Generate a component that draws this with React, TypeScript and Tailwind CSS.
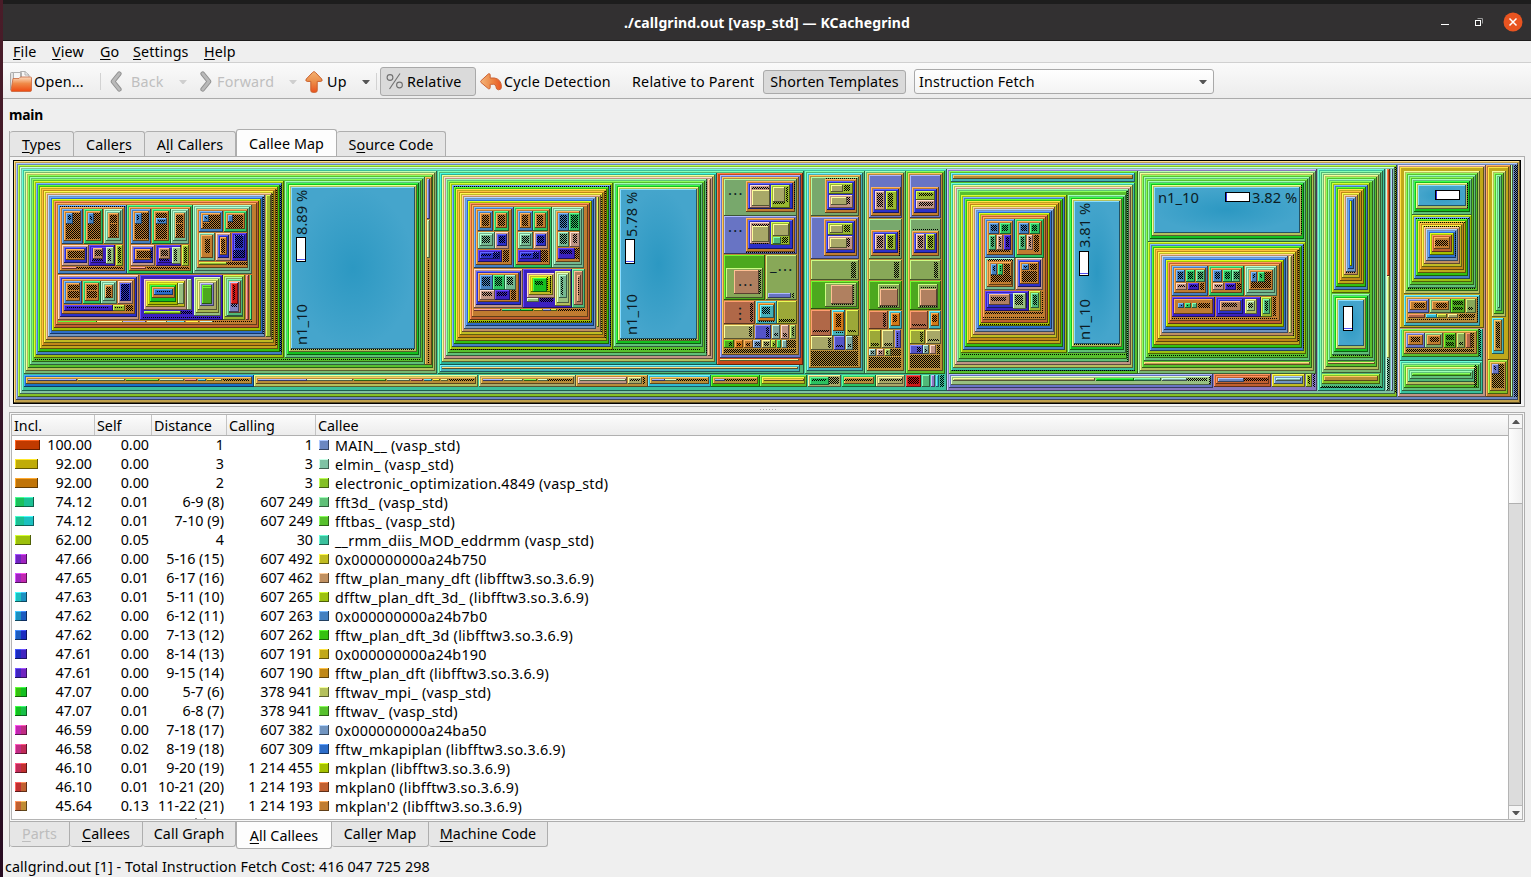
import React from "react";

/* ---------- treemap palette ---------- */
const PALETTE: Record<string, string> = {
  a: "#c0a04c", b: "#6b87c0", c: "#84c026", d: "#7fc2a4", e: "#3ac09c", f: "#78b870",
  g: "#b4c05c", h: "#57c02d", i: "#60c078", j: "#9cc010", k: "#4480c0", l: "#34c010",
  m: "#c0a81a", n: "#c08818", o: "#c0bb22", p: "#c09060", q: "#7094c0", r: "#2c6cc8",
  s: "#a4c000", t: "#c06030", u: "#c07c30", v: "#2cc060", w: "#74b890", z: "#3c20c0",
  A: "#2c30c8", B: "#c09484", C: "#98b830", D: "#c86060", E: "#98c080", F: "#45a5cc",
  G: "#14c020", H: "#a8b850", I: "#8080c0", J: "#d01818", K: "#c84818", L: "#6874c4",
  M: "#78a86c", N: "#4ca81e", O: "#88a858", P: "#b06848", Q: "#44b0b8", R: "#9ca838",
  S: "#a8a868", T: "#5454c8", U: "#80a8a0", V: "#b08060", W: "#1870c8", X: "#d07818",
  Y: "#30b8d0", Z: "#8878c0", "0": "#b88c38", "1": "#2ab098", "2": "#50b878",
};

function shade(hex: string) {
  const n = parseInt(hex.slice(1), 16);
  const rgb = [n >> 16, (n >> 8) & 255, n & 255];
  const v = Math.max(...rgb);
  const v2 = v * 1.5;
  let light: number[];
  if (v2 > 255) {
    const mn = Math.min(...rgb);
    const s = v ? (v - mn) / v : 0;
    const s2 = Math.max(0, s - (v2 - 255) / 255);
    light = rgb.map((c) => {
      const k = v === mn ? 0 : (v - c) / (v - mn);
      return Math.round(255 * (1 - s2 * k));
    });
  } else light = rgb.map((c) => Math.round(c * 1.5));
  const dark = rgb.map((c) => Math.round(c / 2));
  return { light: `rgb(${light.join(",")})`, dark: `rgb(${dark.join(",")})` };
}

/* Each entry: "x1 y1 x2 y2 frames" in thirds of a pixel from the group origin.
   Every letter is one nesting level, "#" is an area too small to subdivide. */
const GROUPS: { ox: number; items: string }[] = [
  { ox: 0, items: `
42 18 4560 744 ab|54 30 4192 726 cd|66 42 2840 708 e|72 48 1312 657 fgh|1274 66 1296 630 0
90 66 1274 630 ih|102 78 853 609 jklmno|138 114 817 555 p|797 120 812 546 C|144 120 796 546 qrstu
102 611 1262 615 #|841 90 845 590 #|829 102 832 572 #|817 114 820 555 #|789 126 792 537 #
174 150 380 357 ku|186 162 250 268 ku|198 174 240 252 #|198 174 218 206 k|204 180 212 196 #
252 162 310 268 vu|264 174 300 252 #|264 174 282 206 k|270 184 276 194 #|312 162 368 268 wwu|330 180 350 204 #|330 207 350 245 #
186 270 266 333 BAu|204 288 252 308 #|268 270 346 333 zz|278 280 310 312 V|284 286 306 302 #|276 312 308 318 #|318 276 342 328 E|325 282 334 318 #
348 270 368 333 C|354 276 362 325 #|186 336 230 342 D|232 336 368 341 #|180 153 374 157 #
382 150 578 357 vu|394 162 454 268 ku|404 174 446 252 #|404 174 426 206 k|411 180 418 196 #
456 162 512 268 vu|468 174 500 252 #|468 188 502 206 k|474 194 494 200 #|514 162 566 268 wwu|529 180 550 204 #|529 207 550 245 #
394 270 466 333 BAu|410 288 456 308 #|468 270 544 333 zz|478 280 510 312 V|484 286 504 302 #|476 312 508 318 #|516 276 542 328 E|523 282 532 318 #
546 270 566 333 C|551 276 560 325 #|394 336 438 342 D|440 336 566 341 #
580 150 757 357 wwu|598 168 670 230 ku|626 180 660 218 #|608 180 626 200 k|614 186 620 192 #|610 204 660 218 #
672 168 740 230 vu|700 180 730 200 #|684 180 700 200 k|684 202 730 218 #|598 234 646 318 wu|614 252 630 295 #
648 234 694 318 BAu|664 252 676 294 #|696 234 740 318 zA|706 240 730 278 #|700 286 736 308 #|598 321 680 330 C|682 321 740 330 #
174 360 418 496 BAu|192 378 246 448 ku|204 390 236 406 #|204 409 236 430 #|248 378 302 448 vu|260 390 290 406 #|260 409 290 430 #
304 378 352 448 wwu|318 396 334 430 #|354 378 398 448 BA|364 388 388 434 #|192 450 338 468 z|200 456 328 460 #|340 450 376 468 C|345 456 370 460 #|378 450 398 468 #
420 360 668 496 z|432 372 560 464 Bo|444 384 534 450 sG|456 396 524 430 ur|470 407 510 412 #|534 384 552 448 E|562 372 576 464 E|432 468 542 476 c|544 468 576 476 #|428 485 660 490 #
582 366 664 484 EHS|600 384 642 454 IN|606 396 636 448 N
670 360 736 496 CM|680 372 730 484 2V|688 380 718 470 I|694 384 714 446 J|699 390 706 436 #|694 447 712 456 #|738 360 748 496 D|750 360 757 496 v
174 498 290 502 l|292 498 368 502 g|370 498 438 502 L|440 498 500 502 E|502 498 556 502 Y|558 498 598 502 o|600 498 638 502 U|640 498 757 502 #
72 659 761 697 W0|84 671 232 679 L|234 671 376 679 E|378 671 478 679 h|480 671 553 679 E|555 671 592 679 D|594 671 618 679 Y|620 671 642 679 o|644 671 666 679 g|668 671 748 679 #
763 659 1435 697 g0|775 671 920 679 L` },
  { ox: 280, items: `
16 78 422 609 iGg|34 96 404 582 F|34 581 404 585 #|441 72 450 193 L|441 195 450 310 E|444 312 448 624 #
82 671 219 679 E|221 671 319 679 h|321 671 391 679 E|393 671 430 679 D|432 671 457 679 Y|459 671 481 679 o|483 671 505 679 g|506 671 583 679 #
597 659 887 697 S0|609 671 670 679 L|672 671 729 679 E|731 671 772 679 h|774 671 803 679 E|804 671 875 679 #
474 48 1573 657 2|480 630 1561 651 Q|486 636 1555 642 a|480 54 1311 630 1gB|1284 72 1293 603 p|498 72 1281 603 ih
510 84 998 585 jklmnop|552 126 948 522 qrstu|510 581 1264 585 #|522 92 992 96 #|1279 78 1282 594 #|991 90 994 572 #|975 106 978 550 #|963 126 966 530 #|950 126 958 516 C|564 498 940 501 #
582 156 701 340 ku|594 168 640 229 ku|606 180 626 214 #|642 168 688 229 vu|654 180 674 214 #|594 231 644 283 ww|606 243 630 264 #|646 231 688 283 BA|656 243 676 264 #|594 285 666 320 zA|604 296 634 302 #|640 291 658 308 #|668 285 688 320 #
702 156 815 340 vu|714 168 758 229 ku|726 180 744 214 #|760 168 804 229 vu|772 180 790 214 #|714 231 760 283 ww|726 243 748 264 #|762 231 804 283 BA|772 243 792 264 #|714 285 782 320 zA|724 296 752 302 #|758 291 774 308 #|784 285 804 320 #
816 156 912 340 wwu|834 174 866 229 k|840 180 860 220 #|868 174 900 229 v|874 180 894 220 #|834 231 868 276 w|840 238 860 266 #|870 231 900 276 B|878 238 892 264 #|834 279 884 311 z|840 286 876 298 #|886 279 898 311 #
582 342 728 459 BAu|600 360 638 404 k|606 366 630 394 #|640 360 674 404 v|646 366 666 394 #|676 360 708 404 w|680 366 700 390 #|600 406 644 434 B|606 412 636 424 #|646 406 690 434 z|650 412 682 424 #|692 406 708 434 #
730 342 875 459 z|742 354 824 428 Bos|758 370 800 410 G|764 378 788 390 #|800 362 803 404 #|811 362 814 416 #|742 430 778 442 E|780 430 818 442 #|826 348 872 452 gE|838 360 860 430 w|844 366 850 420 #
876 342 916 459 2V|890 360 902 440 V|894 366 898 420 #
582 462 664 469 D|666 462 722 469 v|724 462 760 469 G|762 462 788 469 o|790 462 812 469 L|814 462 832 469 C|834 462 915 468 #` },
  { ox: 560, items: `
162 84 428 577 iGg|180 102 410 552 F|180 551 410 555 #
472 54 728 630 K|480 612 716 618 g|480 60 722 609 L0
492 72 710 182 M|558 78 704 172 uA|570 90 631 158 B|576 104 630 152 S|576 96 626 102 #|634 90 690 158 C|640 96 676 140 S|677 96 684 140 #|640 140 676 146 #|702 80 705 166 #
492 184 710 298 L|558 190 704 292 uA|570 202 631 268 B|576 214 628 262 S|576 206 626 212 #|576 263 628 267 #|634 202 690 270 C|638 206 686 244 S|640 246 664 266 2|666 246 684 264 #|558 291 704 294 #
492 300 616 435 N|498 340 608 430 O|522 346 596 418 V|597 346 603 418 #|618 300 710 435 O|624 414 694 430 L|696 414 702 430 #
492 438 586 508 P|570 444 580 502 #|588 438 650 508 QX|600 450 642 488 Q|606 456 630 478 #|596 497 644 502 #|652 438 710 508 R|656 492 704 502 #
492 510 583 552 S|567 516 577 546 #|585 510 634 552 T|618 516 628 546 #|636 510 660 552 U|642 534 654 544 #|662 510 688 552 B|668 534 682 546 #|690 510 708 552 O|696 516 702 544 #
492 555 523 580 N|506 562 516 572 #|525 555 550 580 X|531 564 544 574 #|552 555 578 580 u|558 564 570 574 #|580 555 604 580 q|586 562 600 574 #|606 555 632 580 S|612 562 626 574 #|634 555 648 580 C|638 564 644 572 #|650 555 664 580 v|666 555 680 580 U|682 555 708 580 #|492 582 708 594 #
48 659 263 697 0|54 665 201 687 B|60 671 198 679 E|204 665 246 687 S|209 671 240 679 #|250 665 254 687 #
265 659 452 697 Y0|277 671 314 679 L|316 671 350 679 E|352 671 442 679 #|454 659 599 697 l0|466 671 494 679 L|496 671 588 679 #|601 659 741 697 ho|613 671 733 679 0` },
  { ox: 800, items: `
16 48 194 657 2Q0|34 66 176 184 M|76 72 170 174 uA|78 69 170 73 #|88 84 158 118 C|94 90 130 110 S|132 90 150 108 #|88 121 158 158 B|92 126 140 150 S|140 126 150 148 #
34 187 176 313 L|72 192 170 304 uA|84 204 158 240 C|90 210 130 234 S|132 210 150 232 #|84 243 158 286 B|90 248 140 278 S|141 248 150 276 #
34 316 176 376 O|152 321 168 370 #|34 378 176 463 N|76 384 170 456 O|94 390 158 448 V|159 390 162 448 #|94 448 158 451 #
34 466 94 542 P|40 525 88 531 #|96 466 136 542 Q|100 472 132 528 X|108 477 124 516 #|104 530 130 535 #|138 466 176 542 R|144 525 168 531 #
34 544 100 586 S|84 549 94 580 #|102 544 136 586 T|108 570 130 576 #|138 544 158 586 U|144 567 152 576 #|160 544 174 584 #|34 588 174 634 #
196 48 317 657 i0|208 60 306 190 L|214 96 304 184 uA|226 108 256 164 B|231 114 250 156 #|258 108 290 164 C|264 114 280 156 #
208 192 306 312 M|214 226 300 304 uA|226 238 256 284 B|231 243 250 278 #|258 238 288 284 C|264 243 280 278 #|297 226 300 304 #
208 316 306 376 O|282 321 298 370 #|208 378 306 464 N|234 386 300 458 O|240 402 294 452 V|240 396 292 400 #|240 452 292 455 #
208 468 264 522 P|249 474 258 516 #|266 468 306 522 Q|274 474 300 514 X|279 480 292 500 #|208 526 244 579 R|212 564 238 574 #|246 526 282 579 S|252 564 276 574 #|284 526 304 579 T|290 532 294 574 #
208 582 228 604 U|212 588 222 598 #|230 582 252 604 B|236 588 246 598 #|254 582 272 604 O|258 588 264 598 #|274 582 304 604 #|208 606 304 640 #
318 48 434 657 h0|330 60 422 190 L|336 96 418 182 uA|348 108 404 134 C|356 114 398 124 #|348 136 404 162 B|356 141 398 152 #
330 192 422 312 M|336 228 418 304 uA|338 222 416 226 #|348 238 376 284 B|354 243 370 278 #|378 238 404 284 C|384 243 398 278 #
330 316 422 376 O|402 321 414 370 #|330 378 422 466 N|354 386 414 458 O|360 402 410 452 V|360 396 410 400 #|360 452 410 455 #
330 468 384 522 P|336 507 378 513 #|386 468 422 522 Q|392 474 416 514 X|397 480 410 500 #|330 526 376 568 R|360 532 368 562 #|378 526 422 568 S|384 552 416 558 #
330 570 368 598 T|352 576 362 592 #|370 570 388 598 U|375 582 382 590 #|390 570 408 598 B|410 570 420 598 #|330 600 420 640 #
24 659 124 697 S|30 665 86 690 v|36 671 78 678 #|86 665 116 686 #|126 659 227 697 v0|132 671 216 678 #|229 659 316 697 SS|240 671 306 678 #|318 659 364 697 J|324 665 358 688 #|366 659 390 697 2|393 659 405 697 Z|407 659 417 697 Y|420 659 432 697 #
442 42 1552 708 Z|448 48 1013 657 h|454 54 1005 80 Q|460 60 1000 72 0|454 84 1005 648 egBih|483 120 802 594 jklmnop|525 162 762 531 qrstu|454 644 1005 648 #|483 596 985 600 #|982 108 985 620 #
555 192 644 308 ku|567 204 598 238 k|573 209 592 228 #|600 204 632 238 v|606 209 624 228 #|567 240 589 284 2|573 246 583 276 #|591 240 609 284 B|597 246 603 276 #|611 240 632 284 z|617 246 626 276 #|567 285 630 290 #
645 192 732 308 vu|657 204 688 238 k|663 209 682 228 #|690 204 720 238 v|696 209 712 228 #|657 240 679 284 2|663 246 672 276 #|681 240 699 284 B|687 246 693 276 #|702 240 718 290 #
555 310 645 406 wu|567 321 636 390 u|572 326 592 360 k|578 332 585 348 #|594 326 610 360 v|600 332 604 350 #|612 326 630 360 #|572 361 632 382 #|563 312 640 318 #
648 310 730 406 BAu|666 326 688 346 k|672 333 682 338 #|690 326 712 346 #|666 348 712 382 #
555 408 686 468 zA|567 418 630 450 V|573 426 618 438 #|638 414 678 462 E|645 420 668 450 #|688 408 724 468 C2|699 420 711 450 #|726 408 730 470 #|555 472 730 476 #|548 486 736 490 #|540 507 746 510 #
448 657 1240 700 LE|460 668 885 679 S` },
  { ox: 1040, items: `
84 120 258 594 iGg|102 138 240 567 F|102 567 240 571 #
295 48 827 657 fgh|312 620 810 629 a|313 66 809 618 ih|324 78 797 260 iGg|342 96 779 233 F|783 90 787 240 #
325 262 797 598 jklmnop|747 304 755 535 g|367 304 745 535 qrstu|325 599 794 603 #|788 270 791 580 #|773 286 776 562 #|759 300 762 544 #
397 334 505 423 ku|408 346 436 381 k|414 351 430 372 #|438 346 466 381 v|444 351 460 372 #|468 346 496 381 2|474 351 489 372 #|408 384 441 406 B|414 390 436 396 #|443 384 478 406 z|449 390 472 396 #|480 384 492 406 #
508 334 613 423 vu|518 346 546 381 k|524 351 540 372 #|548 346 575 381 v|554 351 569 372 #|577 346 601 381 2|582 351 596 372 #|518 384 552 406 B|524 390 545 396 #|554 384 588 406 z|560 390 583 396 #|590 384 602 406 #
615 334 710 423 wwu|633 352 652 380 k|639 357 645 370 #|654 352 674 380 v|660 357 667 370 #|676 352 692 380 #|633 382 692 400 #
397 426 525 486 zu|414 444 432 460 k|421 449 426 454 #|434 444 454 460 v|440 449 447 454 #|456 444 472 460 2|474 444 510 460 #
527 426 662 486 z|534 432 610 478 AV|546 444 592 456 #|614 432 652 476 gE|624 444 640 458 #|664 426 696 486 C2|675 438 685 468 #|698 426 708 484 #|397 488 710 492 #
167 668 281 679 G|283 668 364 679 2|366 668 441 679 U|442 668 500 679 #|508 662 514 688 #
523 657 694 697 tt|535 668 613 680 b|613 668 684 678 #|697 657 795 697 oqU` },
  { ox: 1290, items: `
47 657 67 697 C|53 662 60 686 #|68 657 76 697 #|315 36 320 714 #
83 42 285 708 e2|97 657 270 687 c|103 663 264 678 0|97 54 273 655 fgh|114 620 255 628 a|115 72 255 618 ih|127 84 241 415 jklmnopqrs|127 418 241 600 iGg|145 436 223 573 F|127 600 241 603 #|92 694 276 698 #|168 350 196 354 #
287 42 301 708 d|290 42 299 362 K|290 364 299 608 g|291 612 298 705 #|302 42 310 708 q
325 30 587 726 B|331 36 581 520 m|342 48 569 417 ghih|366 72 545 180 iGg|384 90 528 153 F|531 84 534 160 #|366 180 545 381 jklmnopqrstu|436 254 474 272 #|354 398 556 402 #|376 188 540 191 #|388 202 524 205 #|402 212 508 215 #|496 230 499 306 #
342 421 570 514 Q0|562 426 565 504 #|354 433 418 474 Lu|372 444 406 458 #|420 433 482 474 Mu|438 444 470 458 #|484 433 526 474 N|489 438 520 450 #|489 455 520 466 #|528 433 558 474 O|534 456 550 464 #|354 476 406 490 P|408 476 440 490 Y|442 476 472 490 R|474 476 504 490 S|506 476 556 490 #|358 491 556 495 #
330 522 580 617 e|336 522 566 606 h0|348 534 404 580 Lu|362 546 390 560 #|406 534 460 580 Mu|420 546 448 560 #|462 534 498 580 N|467 540 492 554 #|467 560 492 572 #|500 534 526 580 O|507 562 520 570 #|528 534 542 580 P|543 534 552 580 #|348 582 552 592 #|566 522 574 606 #
330 618 580 717 eihg2ih|552 630 562 696 #
588 30 663 726 u|594 36 657 614 m|606 48 649 487 ghi2|606 489 643 596 Q0|618 501 630 580 #|594 616 655 717 c0|606 628 642 700 #|606 628 626 656 L|612 634 618 646 #|664 30 670 726 f|672 30 683 726 #` },
];

const P = (v: number) => Math.round(v / 3);

function Treemap() {
  const out: React.ReactNode[] = [];
  let id = 0;
  for (const grp of GROUPS) {
    for (const raw of grp.items.split(/[|\n]/)) {
      const line = raw.trim();
      if (!line) continue;
      const [a, b, c, d, keys] = line.split(" ");
      let x1 = P(+a) + grp.ox, y1 = P(+b) + 155, x2 = P(+c) + grp.ox, y2 = P(+d) + 155;
      for (const k of keys) {
        const w = x2 - x1, h = y2 - y1;
        if (w <= 0 || h <= 0) break;
        if (k === "#") {
          out.push(<rect key={id++} x={x1} y={y1} width={w} height={h} fill="url(#hatch)" />);
          break;
        }
        const s = shade(PALETTE[k]);
        out.push(
          <g key={id++}>
            <rect x={x1} y={y1} width={w} height={h} fill={s.dark} />
            <rect x={x1} y={y1} width={Math.max(1, w - 1)} height={Math.max(1, h - 1)} fill={s.light} />
            {w > 2 && h > 2 && (
              <rect x={x1 + 1} y={y1 + 1} width={w - 2} height={h - 2} fill={k === "F" ? "url(#leaf)" : PALETTE[k]} />
            )}
          </g>,
        );
        x1 += 2; y1 += 2; x2 -= 2; y2 -= 3;
      }
    }
  }
  const bars: [number, number, number, number, string][] = [
    [296, 237, 10, 25, "b"], [625, 239, 10, 25, "b"], [1079, 251, 10, 25, "b"],
    [1225, 192, 25, 10, "l"], [1435, 190, 25, 10, "l"], [1343, 306, 10, 25, "b"],
  ];
  const labels: [number, number, string, boolean][] = [
    [307, 345, "n1_10", true], [307, 235, "8.89 %", true],
    [637, 335, "n1_10", true], [637, 237, "5.78 %", true],
    [1090, 340, "n1_10", true], [1090, 248, "3.81 %", true],
    [1158, 203, "n1_10", false], [1252, 203, "3.82 %", false],
    [728, 195, "...", false], [728, 232, "...", false], [738, 286, "...", false], [770, 271, "_...", false],
    [741, 321, "...", true],
  ];
  return (
    <svg width="1508" height="244" viewBox="13 160 1508 244" shapeRendering="crispEdges" className="block">
      <defs>
        <pattern id="hatch" width="2" height="2" patternUnits="userSpaceOnUse">
          <rect width="1" height="1" fill="#000" />
          <rect x="1" y="1" width="1" height="1" fill="#000" />
        </pattern>
        <radialGradient id="leaf">
          <stop offset="0" stopColor="#2c98c2" />
          <stop offset="1" stopColor="#45a5cc" />
        </radialGradient>
      </defs>
      <rect x="13" y="160" width="1508" height="244" fill="#000" />
      {out}
      {bars.map(([x, y, w, h, side], n) => (
        <g key={n}>
          <rect x={x} y={y} width={w} height={h} fill="#000" />
          <rect x={x + 1} y={y + 1} width={w - 2} height={h - 2} fill="#fff" />
          {side === "b" ? (
            <rect x={x + 1} y={y + h - 3} width={w - 2} height={1} fill="#5050f0" />
          ) : (
            <rect x={x + 1} y={y + 1} width={1} height={h - 2} fill="#3030e0" />
          )}
        </g>
      ))}
      {labels.map(([x, y, t, rot], n) => (
        <text key={n} x={x} y={y} transform={rot ? `rotate(-90 ${x} ${y})` : undefined} fill="#0c1c24"
          className={t.includes("...") ? "text-[15px] tracking-[1.2px] [font-family:'Noto_Sans',sans-serif]" : "text-[14.7px] [font-family:'Noto_Sans',sans-serif]"}>{t}</text>
      ))}
    </svg>
  );
}

/* ---------- list ---------- */
type Row = [string, string, string, string, string, string, string, string, number];
const ROWS: Row[] = [
  ["100.00", "0.00", "1", "1", "MAIN__ (vasp_std)", "#6b87c0", "#c03a00", "#c03a00", 25],
  ["92.00", "0.00", "3", "3", "elmin_ (vasp_std)", "#7fc2a4", "#c0ac08", "#c0ac08", 23],
  ["92.00", "0.00", "2", "3", "electronic_optimization.4849 (vasp_std)", "#84c026", "#c07408", "#c07408", 23],
  ["74.12", "0.01", "6-9 (8)", "607 249", "fft3d_ (vasp_std)", "#60c078", "#1cc05c", "#1cc094", 19],
  ["74.12", "0.01", "7-10 (9)", "607 249", "fftbas_ (vasp_std)", "#57c02d", "#1cc094", "#1cc0c0", 19],
  ["62.00", "0.05", "4", "30", "__rmm_diis_MOD_eddrmm (vasp_std)", "#3ac09c", "#9cc00c", "#9cc00c", 16],
  ["47.66", "0.00", "5-16 (15)", "607 492", "0x000000000a24b750", "#c0bb22", "#7024c0", "#a024c0", 12],
  ["47.65", "0.01", "6-17 (16)", "607 462", "fftw_plan_many_dft (libfftw3.so.3.6.9)", "#c09060", "#a024c0", "#c028b0", 12],
  ["47.63", "0.01", "5-11 (10)", "607 265", "dfftw_plan_dft_3d_ (libfftw3.so.3.6.9)", "#9cc010", "#1cc0c0", "#1c90c0", 12],
  ["47.62", "0.00", "6-12 (11)", "607 263", "0x000000000a24b7b0", "#4480c0", "#1c90c0", "#1c5cc0", 12],
  ["47.62", "0.00", "7-13 (12)", "607 262", "fftw_plan_dft_3d (libfftw3.so.3.6.9)", "#34c010", "#1c5cc0", "#1c2cc0", 12],
  ["47.61", "0.00", "8-14 (13)", "607 191", "0x000000000a24b190", "#c0a81a", "#1c2cc0", "#4024c0", 12],
  ["47.61", "0.00", "9-15 (14)", "607 190", "fftw_plan_dft (libfftw3.so.3.6.9)", "#c08818", "#4024c0", "#7024c0", 12],
  ["47.07", "0.00", "5-7 (6)", "378 941", "fftwav_mpi_ (vasp_std)", "#b4c05c", "#34c010", "#14c020", 12],
  ["47.07", "0.01", "6-8 (7)", "378 941", "fftwav_ (vasp_std)", "#57c02d", "#14c020", "#18c048", 12],
  ["46.59", "0.00", "7-18 (17)", "607 382", "0x000000000a24ba50", "#7094c0", "#c028b0", "#c02c84", 12],
  ["46.58", "0.02", "8-19 (18)", "607 309", "fftw_mkapiplan (libfftw3.so.3.6.9)", "#2c6cc8", "#c02c84", "#c02c58", 12],
  ["46.10", "0.01", "9-20 (19)", "1 214 455", "mkplan (libfftw3.so.3.6.9)", "#a4c000", "#c02c58", "#c03030", 12],
  ["46.10", "0.01", "10-21 (20)", "1 214 193", "mkplan0 (libfftw3.so.3.6.9)", "#c06030", "#c03030", "#c06030", 12],
  ["45.64", "0.13", "11-22 (21)", "1 214 193", "mkplan'2 (libfftw3.so.3.6.9)", "#c07c30", "#c06030", "#c08c34", 12],
];

function Swatch({ from, to, width, height }: { from: string; to: string; width: number; height: number }) {
  const a = shade(from), b = shade(to);
  const half = Math.floor(width / 2);
  return (
    <svg width={width} height={height} shapeRendering="crispEdges" className="block shrink-0">
      <rect width={half} height={height} fill={from} />
      <rect x={half} width={width - half} height={height} fill={to} />
      <rect width={half} height="1" fill={a.light} />
      <rect x={half} width={width - half} height="1" fill={b.light} />
      <rect width="1" height={height} fill={a.light} />
      <rect y={height - 1} width={half} height="1" fill={a.dark} />
      <rect x={half} y={height - 1} width={width - half} height="1" fill={b.dark} />
      <rect x={width - 1} width="1" height={height} fill={b.dark} />
    </svg>
  );
}

const U = ({ children }: { children: React.ReactNode }) => (
  <span className="underline decoration-[1px] underline-offset-[2px]">{children}</span>
);

const Caret = ({ className }: { className: string }) => (
  <svg width="8" height="4" viewBox="0 0 8 4" className={className}><path d="M0 0h8L4.6 4H3.4z" fill="currentColor" /></svg>
);

const Chevron = ({ flip }: { flip?: boolean }) => (
  <svg width="13" height="21" viewBox="0 0 13 21" className={flip ? "-scale-x-100" : ""}>
    <path d="M9.3 2.7L3 10.5l6.3 7.8" fill="none" stroke="#909090" strokeWidth="4.6" strokeLinecap="round" strokeLinejoin="round" />
    <path d="M9.3 2.7L3 10.5l6.3 7.8" fill="none" stroke="#b9b9b9" strokeWidth="2.8" strokeLinecap="round" strokeLinejoin="round" />
  </svg>
);

function Tab({ children, w, state, bottom }: { children: React.ReactNode; w: string; state?: "on" | "off"; bottom?: boolean }) {
  const edge = bottom ? "rounded-b-[3px] border-t-0" : "rounded-t-[3px] border-b-0";
  const look =
    state === "on"
      ? "h-[27px] bg-[#fdfdfd] border-x"
      : `h-[25px] bg-[#e6e6e6] border-r border-l-0 ${bottom ? "pb-[2px]" : "pt-px"}`;
  return (
    <div className={`flex shrink-0 items-center justify-center border border-[#aeaeae] tracking-[0.08px] ${edge} ${look} ${w} ${state === "off" ? "text-[#bdbdbd]" : ""}`}>
      <span>{children}</span>
    </div>
  );
}

export default function App() {
  return (
    <div className="flex h-[877px] w-[1531px] overflow-hidden whitespace-nowrap bg-[#efefef] text-[14.3px] leading-[19px] text-black [font-family:'Noto_Sans',sans-serif]">
      <div className="w-[3px] shrink-0 bg-gradient-to-b from-[#4a1c28] via-[#341428] to-[#280c22]" />
      <div className="flex min-w-0 flex-1 flex-col">
        {/* title bar */}
        <div className="flex h-[41px] shrink-0 items-center border-t-4 border-b border-t-[#1d1d1d] border-b-[#1c1b1b] bg-[#323031]">
          <div className="w-[1430px] pl-[98px] text-center text-[14px] font-bold tracking-[0.12px] text-white">./callgrind.out [vasp_std] — KCachegrind</div>
          <svg width="90" height="36" viewBox="1433 4 90 36" className="shrink-0">
            <path d="M1441 24.5h8" stroke="#fff" />
            <path d="M1477.5 18.5h5v5" fill="none" stroke="#999" />
            <rect x="1475.5" y="20.5" width="5" height="5" fill="none" stroke="#fff" />
            <circle cx="1513" cy="22" r="9.5" fill="#e95420" />
            <path d="M1509.5 18.5l7 7m0-7l-7 7" stroke="#fff" strokeWidth="1.5" />
          </svg>
        </div>
        {/* menu bar */}
        <div className="flex h-[22px] shrink-0 items-center border-b border-[#d0d0d0] pl-[10px] tracking-[0.15px]">
          <div className="w-[39px]"><U>F</U>ile</div>
          <div className="w-[48px]"><U>V</U>iew</div>
          <div className="w-[33px]"><U>G</U>o</div>
          <div className="w-[71px]"><U>S</U>ettings</div>
          <div><U>H</U>elp</div>
        </div>
        {/* tool bar */}
        <div className="flex h-[36px] shrink-0 items-center border-b border-[#ababab] bg-gradient-to-b from-[#fafafa] to-[#ececec] pt-[2px] pl-[7px] tracking-[0.22px]">
          <div className="flex w-[90px] items-center">
            <svg width="22" height="21" viewBox="0 0 22 21" className="mr-[2px]">
              <path d="M.5 19V2.5q0-1 1-1h4l1 1.5" fill="#e2e2e2" stroke="#aaa" />
              <path d="M3.5 9V1.5h8l0 8M10.5 9V.5h4.5l4 3.5v6" fill="#f6f6f6" stroke="#b0b0b0" />
              <path d="M15 .5V4h4" fill="none" stroke="#b0b0b0" />
              <path d="M3 7.5h6l1.5-1.5h10q1 0 1 1V19q0 1.5-1.5 1.500H2q-1 0-1-1z" fill="url(#folder)" stroke="#c8663c" strokeWidth=".8" />
              <defs><linearGradient id="folder" x1="0" y1="0" x2="0" y2="1"><stop offset="0" stopColor="#fbdcc0" /><stop offset=".45" stopColor="#f08a48" /><stop offset="1" stopColor="#ee4a12" /></linearGradient></defs>
            </svg>
            <span>Open...</span>
          </div>
          <div className="h-[17px] w-px bg-[#d2d2d2]" />
          <div className="flex w-[89px] items-center pl-[9px] text-[#bfbfbf]">
            <Chevron /><span className="ml-[8px] w-[48px]">Back</span><Caret className="text-[#cfcfcf]" />
          </div>
          <div className="flex w-[110px] items-center pl-[9px] text-[#bfbfbf]">
            <Chevron flip /><span className="ml-[5px] w-[72px]">Forward</span><Caret className="text-[#cfcfcf]" />
          </div>
          <div className="flex w-[76px] items-center pl-[5px]">
            <svg width="18" height="22" viewBox="0 0 18 22" className="mr-[4px]">
              <path d="M9 .7q.8 0 1.4.7l6.300 6.600q1.400 2-.9 2.400H12.200V19.500q0 1.800-1.700 1.800H7.500q-1.700 0-1.700-1.800V10.400H2.200q-2.300-.4-.9-2.400L7.600 1.400Q8.200.7 9 .7z" fill="url(#up)" stroke="#c8602c" />
              <defs><linearGradient id="up" x1="0" y1="0" x2="0" y2="1"><stop offset="0" stopColor="#f2b070" /><stop offset=".5" stopColor="#ec8c48" /><stop offset="1" stopColor="#ea5420" /></linearGradient></defs>
            </svg>
            <span className="w-[35px]">Up</span><Caret className="text-[#555]" />
          </div>
          <div className="mr-[3px] h-[17px] w-px bg-[#d2d2d2]" />
          <div className="flex h-[29px] w-[96px] items-center rounded-[3px] border border-[#a9a9a9] bg-[#dadada] pl-[5px]">
            <svg width="18" height="17" viewBox="0 0 18 17" fill="none" stroke="#707070" strokeWidth="1.1" className="mr-[3px]">
              <circle cx="4" cy="4.5" r="2.9" /><circle cx="13.5" cy="12" r="2.9" /><path d="M14 .5L3.5 16" />
            </svg>
            <span>Relative</span>
          </div>
          <div className="ml-[4px] flex w-[152px] items-center">
            <svg width="22" height="18" viewBox="0 0 22 18" className="mr-[2px]">
              <path d="M8.5.8q1.7-.5 1.7 1.3V5h4.300q6.500 1.200 7 8.500 0 3.500-3 3.300-2.600-.3-2.600-3.300-.3-2.200-2.400-2.200h-3.300v3.200q0 1.800-1.700 1.300L1 9.500q-.8-1 0-1.800z" fill="url(#back)" stroke="#cc6436" />
              <defs><linearGradient id="back"><stop offset="0" stopColor="#f4b47a" /><stop offset=".55" stopColor="#ec8644" /><stop offset="1" stopColor="#ea5422" /></linearGradient></defs>
            </svg>
            <span>Cycle Detection</span>
          </div>
          <div className="w-[131px]">Relative to Parent</div>
          <div className="flex h-[24px] w-[143px] items-center justify-center rounded-[3px] border border-[#a9a9a9] bg-[#dadada] tracking-[0.15px]">Shorten Templates</div>
          <div className="ml-[8px] flex h-[25px] w-[300px] items-center justify-between rounded-[3px] border border-[#a9a9a9] bg-gradient-to-b from-white to-[#f3f3f3] pr-[6px] pl-[4px] tracking-[0.12px]">
            <span>Instruction Fetch</span><Caret className="text-[#555]" />
          </div>
        </div>
        {/* function name and upper tabs */}
        <div className="h-[30px] shrink-0 pt-[6px] pl-[6px] text-[13.8px] font-bold tracking-[-0.2px]">main</div>
        <div className="flex h-[27px] shrink-0 items-end pl-[6px]">
          <div className="h-[25px] w-px bg-[#aeaeae]" />
          <Tab w="w-[64px]"><U>T</U>ypes</Tab>
          <Tab w="w-[71px]">Calle<U>r</U>s</Tab>
          <Tab w="w-[91px]">A<U>l</U>l Callers</Tab>
          <Tab w="w-[101px]" state="on">Callee Map</Tab>
          <Tab w="w-[109px]">S<U>o</U>urce Code</Tab>
        </div>
        {/* callee map */}
        <div className="ml-[6px] h-[251px] w-[1516px] shrink-0 border border-[#aeaeae] bg-[#f4f4f4] pt-[3px] pl-[3px]">
          <Treemap />
        </div>
        <div className="flex h-[5px] shrink-0 items-center gap-[2px] pl-[757px]">
          {[0, 1, 2, 3, 4, 5].map((n) => <div key={n} className="size-px bg-[#b0b0b0]" />)}
        </div>
        {/* callee list */}
        <div className="ml-[6px] flex h-[410px] w-[1516px] shrink-0 border border-[#aeaeae] bg-[#f7f7f7] p-px">
          <div className="flex min-w-0 flex-1 flex-col border border-r-0 border-[#b4b4b4] bg-white">
            <div className="flex h-[21px] shrink-0 items-center border-b border-[#b0b0b0] bg-gradient-to-b from-[#fcfcfc] to-[#ececec] [&>div]:h-[20px] [&>div]:border-r [&>div]:border-[#c4c4c4] [&>div]:pl-[2px] [&>div]:leading-[21px]">
              <div className="w-[83px]">Incl.</div>
              <div className="w-[57px]">Self</div>
              <div className="w-[75px]">Distance</div>
              <div className="w-[89px]">Calling</div>
              <div className="flex-1 border-r-0!">Callee</div>
            </div>
            <div className="min-h-0 flex-1 overflow-hidden">
              {ROWS.map((r, n) => (
                <div key={n} className="flex h-[19px] items-center pb-px leading-[18px]">
                  <div className="flex w-[80px] items-center justify-between pl-[3px]">
                    <Swatch from={r[6]} to={r[7]} width={r[8]} height={10} />
                    <span>{r[0]}</span>
                  </div>
                  <div className="w-[57px] text-right">{r[1]}</div>
                  <div className="w-[75px] text-right">{r[2]}</div>
                  <div className="w-[89px] text-right">{r[3]}</div>
                  <div className="flex h-[18px] items-center pl-[6px]">
                    <Swatch from={r[5]} to={r[5]} width={10} height={10} />
                    <span className="pt-px pl-[6px] tracking-[0.26px]">{r[4]}</span>
                  </div>
                </div>
              ))}
              {/* tops of the brackets of the next, scrolled-off row */}
              <div className="flex h-[3px] items-end gap-[7px] pl-[181px]">
                <div className="ml-[2px] h-px w-[2px] bg-[#999]" />
                <div className="h-px w-[2px] bg-[#999]" />
              </div>
            </div>
          </div>
          <div className="flex w-[15px] shrink-0 flex-col border border-[#b4b4b4] bg-[#dcdcdc]">
            <div className="flex h-[14px] items-center justify-center border-b border-[#b8b8b8] bg-[#f6f6f6]"><Caret className="rotate-180 text-[#555]" /></div>
            <div className="h-[75px] border-b border-[#b0b0b0] bg-gradient-to-r from-[#fdfdfd] to-[#f0f0f0]" />
            <div className="flex-1" />
            <div className="flex h-[14px] items-center justify-center border-t border-[#b8b8b8] bg-[#f6f6f6]"><Caret className="text-[#555]" /></div>
          </div>
        </div>
        {/* lower tabs */}
        <div className="flex h-[35px] shrink-0 items-start pl-[6px]">
          <div className="h-[25px] w-px bg-[#aeaeae]" />
          <Tab bottom w="w-[60px]" state="off"><U>P</U>arts</Tab>
          <Tab bottom w="w-[73px]"><U>C</U>allees</Tab>
          <Tab bottom w="w-[93px]">Call Graph</Tab>
          <Tab bottom w="w-[96px]" state="on"><U>A</U>ll Callees</Tab>
          <Tab bottom w="w-[97px]">Call<U>e</U>r Map</Tab>
          <Tab bottom w="w-[119px]"><U>M</U>achine Code</Tab>
        </div>
        <div className="pl-[2px] tracking-[0.1px]">callgrind.out [1] - Total Instruction Fetch Cost: 416 047 725 298</div>
      </div>
    </div>
  );
}
